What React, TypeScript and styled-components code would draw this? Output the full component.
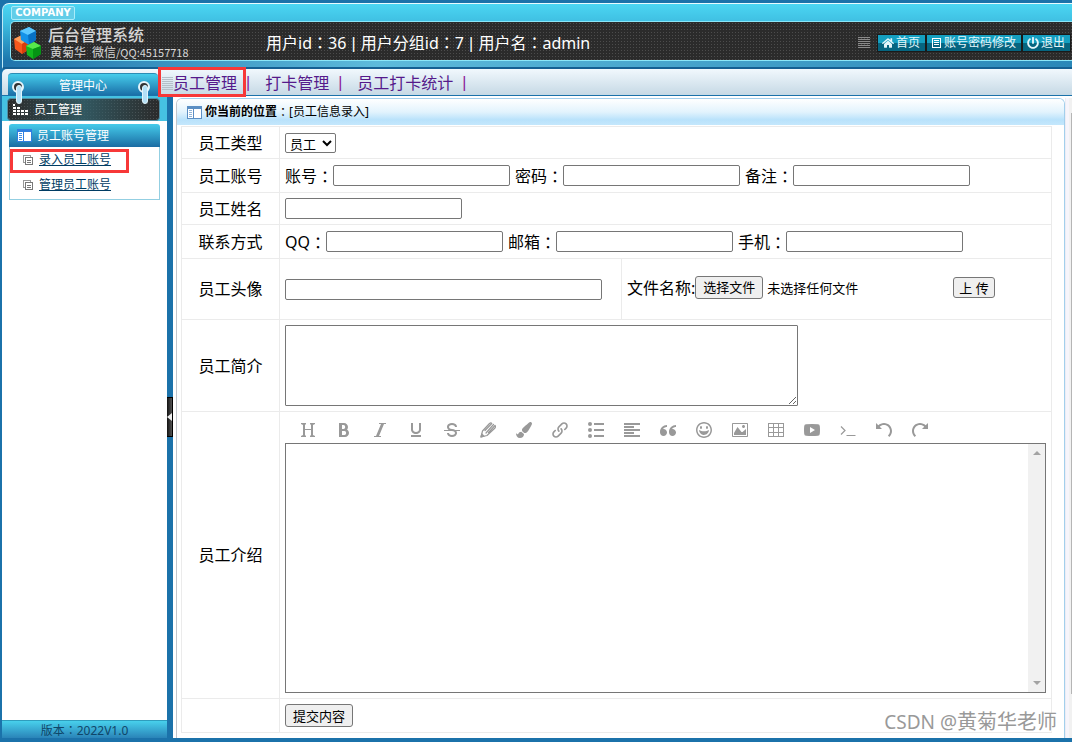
import React from "react";
import styled, { createGlobalStyle, css } from "styled-components";
import { ImBold, ImItalic, ImUnderline, ImStrikethrough, ImLink, ImParagraphLeft, ImQuotesLeft, ImHappy, ImImage, ImUndo, ImRedo } from "react-icons/im";
import { FaPaintBrush, FaHome, FaPowerOff } from "react-icons/fa";

const GlobalStyle = createGlobalStyle`
  *, *::before, *::after { box-sizing: border-box; }
  body {
    margin: 0;
    background: #1b72aa;
    color: #000;
    font: 16px/20px "Noto Sans", "Noto Sans CJK SC", sans-serif;
  }
  a { color: inherit; }
  button, input, select, textarea { font: 13px/16px "Noto Sans", "Noto Sans CJK SC", sans-serif; color: #000; }
`;

const dots = css`
  background-color: #2b2b2b;
  background-image: radial-gradient(#4c4c4c, transparent 1px);
  background-size: 3px 3px;
`;

const Page = styled.div`
  position: relative;
  display: flex;
  flex-direction: column;
  min-height: 100vh;
  padding: 0 0 4px 2px;
`;

/* ---------- header ---------- */

const Header = styled.header`
  margin-top: 3px;
  padding: 2px 0 6px 7px;
  border-top: 1px solid #e8fbff;
  border-left: 1px solid #bfeaf6;
  border-bottom: 2px solid #155f92;
  border-top-left-radius: 7px;
  background:
    linear-gradient(90deg, #1f74ac, #5dbadb 35%, #2a87b8) left bottom / 100% 6px no-repeat,
    linear-gradient(#4bd6f3, #3fbfe2 18px, #1d78ae 56px);
`;

const Badge = styled.div`
  width: 64px;
  height: 14px;
  margin: 0 0 1px 1px;
  border: 1px solid #a9ecfa;
  border-radius: 2px;
  background: #62cde8;
  color: #fff;
  font: bold 10px/12px "DejaVu Sans", sans-serif;
  text-align: center;
`;

const HeaderPanel = styled.div`
  ${dots}
  display: flex;
  align-items: center;
  height: 40px;
  padding: 3px 2px 0 3px;
  border: solid #8be6f8;
  border-width: 1px 0 1px 1px;
  border-radius: 5px 0 0 5px;
`;

const Brand = styled.div`
  display: flex;
  align-items: center;
  gap: 6px;
  width: 252px;
  flex: none;
  color: #d6d6d6;
`;

const BrandName = styled.h1`
  margin: 0;
  font-size: 16px;
  line-height: 18px;
  font-weight: 500;
`;

const BrandSub = styled.p`
  margin: 0;
  padding-left: 2px;
  display: flex;
  gap: 6px;
  font: 12px/15px "Noto Sans CJK SC", sans-serif;
  small { font-size: 11px; }
`;

const UserInfo = styled.p`
  margin: 0;
  color: #fff;
  white-space: nowrap;
`;

const Quick = styled.nav`
  display: flex;
  align-items: center;
  gap: 2px;
  margin-left: auto;
  padding-top: 1px;
`;

const QuickList = styled.span`
  width: 12px;
  height: 12px;
  margin-right: 6px;
  background: repeating-linear-gradient(#8a8a8a 0 1px, transparent 1px 2px);
`;

const QuickLink = styled.a`
  display: flex;
  align-items: center;
  gap: 2px;
  height: 16px;
  padding: 0 5px 0 4px;
  outline: 1px solid #1a1a1a;
  background: linear-gradient(#159fc0 50%, #066580 50%);
  color: #e4f6fa;
  font-size: 12px;
  line-height: 16px;
  text-decoration: none;
  white-space: nowrap;
`;

/* ---------- navigation ---------- */

const NavBar = styled.div`
  display: flex;
  height: 27px;
  padding-left: 6px;
  border-bottom: 1px solid #1b72aa;
  border-top-left-radius: 5px;
  background: linear-gradient(#f1f8fd, #c6d9e5);
`;

const MenuTitle = styled.div`
  position: relative;
  z-index: 2;
  width: 150px;
  height: 22px;
  margin: 4px 0 0;
  border-top: 1px solid #2b8db5;
  border-radius: 4px 4px 0 0;
  background: linear-gradient(#46cdeb, #1a6fa8);
  color: #fff;
  font-size: 12px;
  line-height: 24px;
  text-align: center;
`;

const Hook = styled.i<{ $side: "left" | "right" }>`
  position: absolute;
  top: 7px;
  ${(p) => (p.$side === "left" ? "left: 4px" : "right: 8px")};
  width: 12px;
  height: 12px;
  border: 2px solid #e6f4fa;
  border-radius: 50%;
  background: #333;
  &::after {
    content: "";
    position: absolute;
    left: 2px;
    top: 2px;
    width: 6px;
    height: 19px;
    border: 1px solid #e2f5fc;
    border-radius: 3px;
    background: #b4e0f6;
  }
`;

const Tabs = styled.nav`
  display: flex;
  align-items: center;
  padding-top: 2px;
`;

const Tab = styled.a<{ $marked?: boolean }>`
  position: relative;
  padding: 0 8px 0 14px;
  color: #551a8b;
  text-decoration: none;
  ${(p) =>
    p.$marked &&
    css`
      display: flex;
      align-items: center;
      padding-left: 4px;
      &::before {
        content: "";
        width: 11px;
        height: 13px;
        background: repeating-linear-gradient(#b4bfc8 0 1px, transparent 1px 2px);
      }
      &::after {
        content: "";
        position: absolute;
        z-index: 3;
        inset: -6px -1px -4px 0;
        border: 3px solid #f73838;
      }
    `}
`;

/* ---------- body ---------- */

const Body = styled.div`
  display: flex;
  flex: 1;
`;

const Sidebar = styled.aside`
  display: flex;
  flex-direction: column;
  width: 165px;
  flex: none;
  background: #fff;
  font-size: 12px;
`;

const SectionStrip = styled.div`
  padding: 2px 7px 0 5px;
  height: 25px;
  background: #45c2e2;
`;

const Section = styled.button`
  ${dots}
  background-image: linear-gradient(90deg, transparent, #34636ecc 50%, transparent), radial-gradient(#4c4c4c, transparent 1px);
  background-size: 100% 100%, 3px 3px;
  display: flex;
  align-items: center;
  gap: 6px;
  width: 100%;
  height: 23px;
  padding: 0 5px;
  border: 1px solid #4f8fa5;
  border-radius: 4px;
  color: #fff;
  font-size: 12px;
  line-height: 16px;
`;

const Group = styled.section`
  margin: 3px 7px 0;
`;

const GroupTitle = styled.h2`
  display: flex;
  align-items: center;
  gap: 5px;
  height: 23px;
  margin: 0;
  padding-left: 8px;
  border-radius: 3px 3px 0 0;
  background: linear-gradient(#45cbea, #1a6ca3);
  color: #fff;
  font-size: 12px;
  font-weight: 400;
`;

const GroupLinks = styled.ul`
  margin: 0;
  padding: 0 0 2px;
  border: 1px solid #93cfe2;
  border-top: 0;
  list-style: none;
`;

const GroupItem = styled.li<{ $marked?: boolean }>`
  position: relative;
  display: flex;
  align-items: center;
  gap: 6px;
  height: 25px;
  padding-left: 13px;
  color: #003c63;
  ${(p) =>
    p.$marked &&
    css`
      &::after {
        content: "";
        position: absolute;
        inset: 2px 30px -1px 0;
        border: 3px solid #f73838;
        pointer-events: none;
      }
    `}
`;

const Version = styled.footer`
  height: 18px;
  margin-top: auto;
  background: linear-gradient(#48d0ec, #2a84b8);
  border-top: 1px solid #2f9dbd;
  color: #0f4669;
  line-height: 18px;
  text-align: center;
`;

const Splitter = styled.div`
  display: flex;
  align-items: center;
  width: 6px;
  flex: none;
`;

const Collapse = styled.button`
  width: 6px;
  height: 40px;
  padding: 0;
  border: 1px solid #000;
  border-left: 0;
  background: linear-gradient(90deg, #111, #555);
  svg { display: block; }
`;

const Main = styled.main`
  display: flex;
  flex: 1;
  min-width: 0;
  padding: 2px 0 0 3px;
  background: #fff;
`;

const Panel = styled.section`
  flex: 1;
  min-width: 0;
  border: 1px solid #a3cfec;
  border-left-color: #c2c6cc;
  border-bottom: 0;
  border-radius: 6px 6px 0 0;
`;

const PanelTitle = styled.div`
  display: flex;
  align-items: center;
  height: 26px;
  padding-left: 10px;
  border-radius: 5px 5px 0 0;
  background: linear-gradient(#fff, #e2f3fd 50%, #b9e2fb 80%, #c4e7fc);
  font-size: 12px;
  line-height: 16px;
  svg { margin-right: 3px; }
`;

const Gutter = styled.div`
  width: 7px;
  flex: none;
  padding: 15px 0 44px;
  background: linear-gradient(90deg, #ececf4 0 1px, #f7f5fb 1px 4px, #f1f1f1 4px);
  &::after {
    content: "";
    display: block;
    width: 1px;
    height: 100%;
    margin-left: auto;
    background: #b5b5b5;
  }
`;

const Form = styled.form`
  margin: 1px 12px 5px 4px;
  border: 1px solid #ebebeb;
`;

const Row = styled.div<{ $h: number }>`
  display: grid;
  grid-template-columns: 98px 1fr;
  min-height: ${(p) => p.$h}px;
  & + & { border-top: 1px solid #ebebeb; }
`;

const RowLabel = styled.div`
  display: flex;
  align-items: center;
  justify-content: center;
  border-right: 1px solid #ebebeb;
`;

const Cell = styled.div`
  display: flex;
  align-items: center;
  gap: 5px;
  padding: 0 5px;
`;

const Stack = styled(Cell)`
  flex-direction: column;
  align-items: stretch;
  gap: 0;
`;

const AvatarCell = styled.div`
  display: grid;
  grid-template-columns: 341px 1fr;
`;

const UploadCell = styled(Cell)`
  gap: 0;
  padding-bottom: 3px;
  border-left: 1px solid #ebebeb;
`;

const Field = styled.label`
  display: flex;
  align-items: center;
  white-space: nowrap;
`;

const Text = styled.input<{ $w?: number }>`
  width: ${(p) => p.$w ?? 177}px;
  height: 21px;
  padding: 1px 2px;
  border: 1px solid #767676;
  border-radius: 2px;
  background: #fff;
`;

const Select = styled.select`
  width: 51px;
  height: 20px;
  padding: 0;
  border: 1px solid #767676;
  border-radius: 2px;
  background: #fff;
`;

const Button = styled.button`
  height: 23px;
  padding: 0 7px;
  border: 1px solid #767676;
  border-radius: 3px;
  background: #efefef;
`;

const Upload = styled(Button)`
  height: 21px;
  padding: 0 5px;
  margin-left: 95px;
`;

const FileLabel = styled.label`
  position: relative;
  display: flex;
  align-items: center;
  gap: 4px;
  font-size: 13px;
  input { position: absolute; inset: 0; opacity: 0; width: 100%; }
`;

const FileButton = styled.span`
  height: 23px;
  padding: 0 7px;
  border: 1px solid #767676;
  border-radius: 3px;
  background: #efefef;
  line-height: 20px;
`;

const Summary = styled.textarea`
  width: 513px;
  height: 81px;
  border: 1px solid #767676;
  border-radius: 1px;
`;

const Toolbar = styled.div`
  display: flex;
  padding: 5px 0 0 5px;
`;

const Tool = styled.button`
  display: flex;
  align-items: center;
  justify-content: center;
  width: 36px;
  height: 26px;
  padding: 0;
  border: 0;
  background: none;
  color: #999;
  svg { width: 16px; height: 16px; }
`;

const Editor = styled.div`
  display: flex;
  height: 250px;
  margin-bottom: 5px;
  border: 1px solid #767676;
`;

const EditorArea = styled.textarea`
  flex: 1;
  border: 0;
  outline: 0;
  resize: none;
`;

const ScrollTrack = styled.div`
  display: flex;
  flex-direction: column;
  align-items: center;
  justify-content: space-between;
  width: 17px;
  padding: 7px 0;
  background: #f1f1f1;
  svg { display: block; }
`;

const Watermark = styled.div`
  position: absolute;
  right: 15px;
  bottom: 8px;
  color: #999;
  font-size: 19px;
  line-height: 24px;
  text-shadow: 1px 1px 0 #fff;
  pointer-events: none;
  white-space: nowrap;
  span { font-size: 20px; }
`;

const ColonMark = styled.span`
  font-family: "Noto Sans CJK TC", sans-serif;
`;

const Divider = styled.span<{ $purple?: boolean }>`
  padding: 0 1px;
  color: ${(p) => (p.$purple ? "#8b1a9a" : "inherit")};
  font-family: "Liberation Sans", sans-serif;
`;

const Colon = () => <ColonMark>：</ColonMark>;

const Logo = () => (
  <svg width="28" height="34" viewBox="0 0 28 34" aria-hidden="true">
    <path d="M0 13l8-4 6 5v10l-6 4-7-5z" fill="#f4581c" />
    <path d="M0 13l8-4 6 5-6 4z" fill="#ffa05a" />
    <path d="M8 18l6-4v10l-6 4z" fill="#d83d0c" />
    <path d="M6 5l9-4 7 4v9l-7 5-8-5z" fill="#1492e8" />
    <path d="M6 5l9-4 7 4-8 4z" fill="#5cc8ff" />
    <path d="M14 9l8-4v9l-7 5z" fill="#0871c4" />
    <path d="M12 20l8-4 7 4v8l-8 5-6-4z" fill="#12b81e" />
    <path d="M12 20l8-4 7 4-8 3z" fill="#58e84c" />
    <path d="M19 23l8-3v8l-8 5z" fill="#059414" />
  </svg>
);

const WindowIcon = ({ frame, fill }: { frame: string; fill: string }) => (
  <svg width="15" height="13" viewBox="0 0 15 13" shapeRendering="crispEdges" aria-hidden="true">
    <path fill={frame} d="M0 0h15v13H0z" />
    <path fill="#fff" d="M1 3h5v9H1zM7 3h7v9H7z" />
    <path fill={fill} d="M2 4h3v1H2zM2 6h3v1H2zM2 8h3v1H2zM2 10h3v1H2z" />
  </svg>
);

const CopyIcon = () => (
  <svg width="10" height="10" viewBox="0 0 10 10" shapeRendering="crispEdges" aria-hidden="true">
    <path fill="#999" d="M0 0h8v2H7V1H1v6h1v1H0z" />
    <path fill="#777" d="M2 2h8v8H2zm1 1v6h6V3zM4 5h4v1H4zM4 7h4v1H4z" fillRule="evenodd" />
  </svg>
);

const DotsIcon = () => (
  <svg width="15" height="11" viewBox="0 0 15 11" shapeRendering="crispEdges" fill="#fff" aria-hidden="true">
    <path d="M0 0h2v2H0zM0 3h3v2H0zM0 6h3v2H0zM0 9h3v2H0zM4 3h3v2H4zM4 6h3v2H4zM4 9h3v2H4zM8 6h3v2H8zM8 9h3v2H8zM12 6h3v2h-3zM12 9h3v2h-3z" />
  </svg>
);

const ListIcon = () => (
  <svg width="11" height="10" viewBox="0 0 11 10" shapeRendering="crispEdges" aria-hidden="true">
    <path fill="#fff" fillRule="evenodd" d="M1 0h9v10H1zm1 1v8h7V1zM3 2h5v1H3zM3 4h5v1H3zM3 6h5v1H3z" />
  </svg>
);

const HeadingIcon = () => (
  <svg viewBox="0 0 16 16" fill="currentColor">
    <path d="M1 1h5v1L5 3v4h6V3l-1-1V1h5v1l-2 1v10l2 1v1h-5v-1l1-1V8H5v5l1 1v1H1v-1l2-1V3L1 2z" />
  </svg>
);

const PencilIcon = () => (
  <svg viewBox="0 0 16 16" fill="none" stroke="currentColor" strokeWidth="1.2" strokeLinejoin="round" strokeLinecap="round">
    <path d="M1 15l1.500-6 7-7.500q1.500-1.200 2.300 0L5 8.500M1 15l6-1.500 8-7.500q1-1.500 0-2.500L8.500 10.500" />
    <path d="M6 11l7.500-8.500" />
    <path d="M1 15l.8-3 2.200 2.200z" fill="currentColor" />
  </svg>
);

const BulletsIcon = () => (
  <svg viewBox="0 0 16 16" fill="currentColor">
    <circle cx="2" cy="2" r="2" /><circle cx="2" cy="8" r="2" /><circle cx="2" cy="14" r="2" />
    <path d="M6 1h10v2H6zM6 7h10v2H6zM6 13h10v2H6z" />
  </svg>
);

const TableIcon = () => (
  <svg viewBox="0 0 16 16" fill="currentColor">
    <path fillRule="evenodd" d="M0 1h16v14H0zM1 2v3h4V2zM6 2v3h4V2zM11 2v3h4V2zM1 6v4h4V6zM6 6v4h4V6zM11 6v4h4V6zM1 11v3h4v-3zM6 11v3h4v-3zM11 11v3h4v-3z" />
  </svg>
);

const VideoIcon = () => (
  <svg viewBox="0 0 16 16" fill="currentColor">
    <path fillRule="evenodd" d="M2 2.300q6-.6 12 0 1.700 .2 1.800 2 .4 3.700 0 7.400-.1 1.800-1.800 2-6 .6-12 0Q.3 13.500 .2 11.700q-.4-3.700 0-7.400 .1-1.800 1.800-2zM6 5v6l5-3z" />
  </svg>
);

const TerminalIcon = () => (
  <svg viewBox="0 0 16 16" fill="none" stroke="currentColor" strokeWidth="1.200">
    <path d="M1 4.500l4 4-4 4M6.500 13.500h9" />
  </svg>
);

const tools: [string, React.ReactNode][] = [
  ["标题", <HeadingIcon />],
  ["粗体", <ImBold />],
  ["斜体", <ImItalic />],
  ["下划线", <ImUnderline />],
  ["删除线", <ImStrikethrough />],
  ["文字颜色", <PencilIcon />],
  ["背景色", <FaPaintBrush />],
  ["链接", <ImLink />],
  ["列表", <BulletsIcon />],
  ["对齐", <ImParagraphLeft />],
  ["引用", <ImQuotesLeft />],
  ["表情", <ImHappy />],
  ["图片", <ImImage />],
  ["表格", <TableIcon />],
  ["视频", <VideoIcon />],
  ["代码", <TerminalIcon />],
  ["撤销", <ImUndo />],
  ["重做", <ImRedo />],
];

const LabeledText = ({ name }: { name: string }) => (
  <Field>
    {name}
    <Colon />
    <Text type="text" />
  </Field>
);

export default function App() {
  return (
    <>
      <GlobalStyle />
      <Page>
        <Header>
          <Badge>COMPANY</Badge>
          <HeaderPanel>
            <Brand>
              <Logo />
              <div>
                <BrandName>后台管理系统</BrandName>
                <BrandSub>
                  <span>黄菊华</span>
                  <span>微信<small>/QQ:45157718</small></span>
                </BrandSub>
              </div>
            </Brand>
            <UserInfo>
              用户id<Colon />36 <Divider>|</Divider> 用户分组id<Colon />7 <Divider>|</Divider> 用户名<Colon />admin
            </UserInfo>
            <Quick>
              <QuickList />
              <QuickLink href="#home"><FaHome size={12} />首页</QuickLink>
              <QuickLink href="#account"><ListIcon />账号密码修改</QuickLink>
              <QuickLink href="#logout"><FaPowerOff size={12} />退出</QuickLink>
            </Quick>
          </HeaderPanel>
        </Header>

        <NavBar>
          <MenuTitle>
            <Hook $side="left" />
            管理中心
            <Hook $side="right" />
          </MenuTitle>
          <Tabs>
            <Tab href="#staff" $marked>员工管理</Tab><Divider $purple>|</Divider>
            <Tab href="#clock">打卡管理</Tab><Divider $purple>|</Divider>
            <Tab href="#stats">员工打卡统计</Tab><Divider $purple>|</Divider>
          </Tabs>
        </NavBar>

        <Body>
          <Sidebar>
            <SectionStrip>
              <Section type="button"><DotsIcon />员工管理</Section>
            </SectionStrip>
            <Group>
              <GroupTitle><WindowIcon frame="#2f7fe0" fill="#3f8fe8" />员工账号管理</GroupTitle>
              <GroupLinks>
                <GroupItem $marked><CopyIcon /><a href="#add">录入员工账号</a></GroupItem>
                <GroupItem><CopyIcon /><a href="#manage">管理员工账号</a></GroupItem>
              </GroupLinks>
            </Group>
            <Version>版本<Colon />2022V1.0</Version>
          </Sidebar>

          <Splitter>
            <Collapse type="button" aria-label="收起">
              <svg width="5" height="8" viewBox="0 0 5 8"><path d="M5 0v8L0 4z" fill="#eee" /></svg>
            </Collapse>
          </Splitter>

          <Main>
            <Panel>
              <PanelTitle>
                <WindowIcon frame="#5b8fc4" fill="#8fb4d8" />
                <b>你当前的位置</b><Colon />[员工信息录入]
              </PanelTitle>
              <Form>
                <Row $h={31}>
                  <RowLabel as="label" htmlFor="type">员工类型</RowLabel>
                  <Cell>
                    <Select id="type"><option>员工</option></Select>
                  </Cell>
                </Row>
                <Row $h={34}>
                  <RowLabel>员工账号</RowLabel>
                  <Cell>
                    <LabeledText name="账号" />
                    <LabeledText name="密码" />
                    <LabeledText name="备注" />
                  </Cell>
                </Row>
                <Row $h={32}>
                  <RowLabel as="label" htmlFor="name">员工姓名</RowLabel>
                  <Cell><Text id="name" type="text" /></Cell>
                </Row>
                <Row $h={34}>
                  <RowLabel>联系方式</RowLabel>
                  <Cell>
                    <LabeledText name="QQ" />
                    <LabeledText name="邮箱" />
                    <LabeledText name="手机" />
                  </Cell>
                </Row>
                <Row $h={61}>
                  <RowLabel as="label" htmlFor="avatar">员工头像</RowLabel>
                  <AvatarCell>
                    <Cell><Text id="avatar" type="text" $w={317} /></Cell>
                    <UploadCell>
                      文件名称:
                      <FileLabel>
                        <input type="file" aria-label="选择文件" />
                        <FileButton>选择文件</FileButton>
                        未选择任何文件
                      </FileLabel>
                      <Upload type="button">上 传</Upload>
                    </UploadCell>
                  </AvatarCell>
                </Row>
                <Row $h={92}>
                  <RowLabel as="label" htmlFor="summary">员工简介</RowLabel>
                  <Cell><Summary id="summary" /></Cell>
                </Row>
                <Row $h={287}>
                  <RowLabel as="label" htmlFor="intro">员工介绍</RowLabel>
                  <Stack>
                    <Toolbar>
                      {tools.map(([name, icon]) => (
                        <Tool key={name} type="button" aria-label={name}>{icon}</Tool>
                      ))}
                    </Toolbar>
                    <Editor>
                      <EditorArea id="intro" />
                      <ScrollTrack>
                        <svg width="8" height="4" viewBox="0 0 8 4"><path d="M0 4h8L4 0z" fill="#a3a3a3" /></svg>
                        <svg width="8" height="4" viewBox="0 0 8 4"><path d="M0 0h8L4 4z" fill="#a3a3a3" /></svg>
                      </ScrollTrack>
                    </Editor>
                  </Stack>
                </Row>
                <Row $h={34}>
                  <RowLabel />
                  <Cell><Button type="button">提交内容</Button></Cell>
                </Row>
              </Form>
            </Panel>
            <Gutter />
          </Main>
        </Body>
        <Watermark>CSDN @<span>黄菊华老师</span></Watermark>
      </Page>
    </>
  );
}
